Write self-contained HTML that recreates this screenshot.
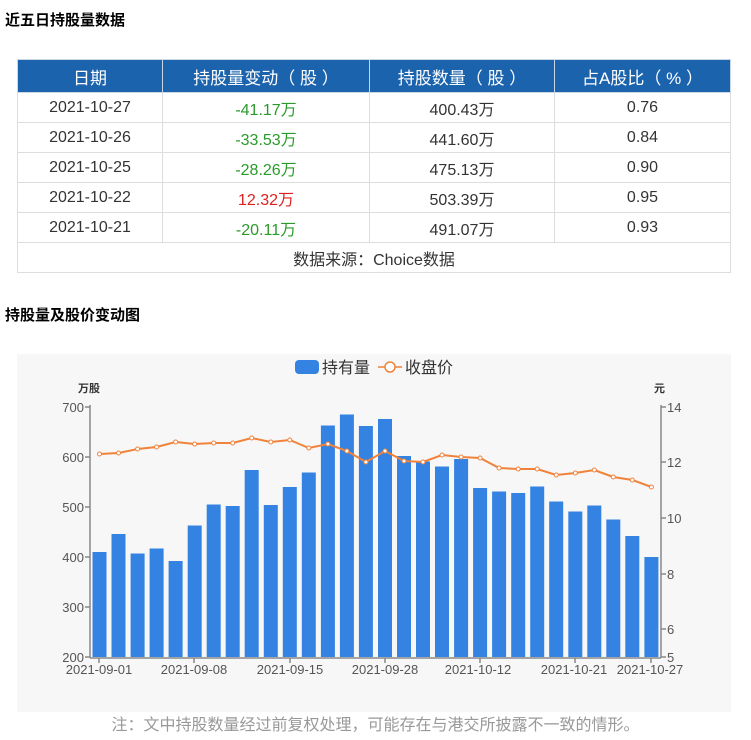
<!DOCTYPE html>
<html><head><meta charset="utf-8"><style>
body{margin:0;width:751px;height:740px;background:#fff;font-family:"Liberation Sans","Noto Sans CJK SC",sans-serif;position:relative;overflow:hidden}
.h{position:absolute;left:5px;font-weight:bold;font-size:15px;color:#000}
table{position:absolute;left:17px;top:59px;width:714px;border-collapse:collapse;font-size:16px;color:#333}
td,th{border:1px solid #ddd;text-align:center;height:29px;padding:0}
th{background:#1c63ae;color:#fff;font-weight:normal;font-size:17px;height:32px;border-color:#c9d6e6}
.g{color:#2a9b2a}.r{color:#e02020}
.note{position:absolute;top:711px;left:0;width:751px;text-align:center;font-size:16px;color:#999}
</style></head><body>
<div class="h" style="top:9px">近五日持股量数据</div>
<table>
<tr><th style="width:144px">日期</th><th style="width:206px">持股量变动（ 股 ）</th><th style="width:184px">持股数量（ 股 ）</th><th>占A股比（ % ）</th></tr>
<tr><td>2021-10-27</td><td class="g">-41.17万</td><td>400.43万</td><td>0.76</td></tr>
<tr><td>2021-10-26</td><td class="g">-33.53万</td><td>441.60万</td><td>0.84</td></tr>
<tr><td>2021-10-25</td><td class="g">-28.26万</td><td>475.13万</td><td>0.90</td></tr>
<tr><td>2021-10-22</td><td class="r">12.32万</td><td>503.39万</td><td>0.95</td></tr>
<tr><td>2021-10-21</td><td class="g">-20.11万</td><td>491.07万</td><td>0.93</td></tr>
<tr><td colspan="4">数据来源：Choice数据</td></tr>
</table>
<div class="h" style="top:304px">持股量及股价变动图</div>
<svg style="position:absolute;left:0;top:0" width="751" height="740" font-family="Liberation Sans,Noto Sans CJK SC,sans-serif">
<rect x="17" y="354" width="714" height="358" fill="#f7f7f7"/>
<rect x="295" y="360" width="24" height="14" rx="4" fill="#3483e2"/>
<text x="322" y="373" font-size="16" fill="#333">持有量</text>
<line x1="378" y1="367" x2="402" y2="367" stroke="#f0823a" stroke-width="1.5"/>
<circle cx="390" cy="367" r="5" fill="#fff" stroke="#f0823a" stroke-width="1.5"/>
<text x="405" y="373" font-size="16" fill="#333">收盘价</text>
<text x="78" y="392" font-size="11" font-weight="bold" fill="#333">万股</text>
<text x="654" y="392" font-size="11" font-weight="bold" fill="#333">元</text>
<g font-size="13" fill="#555" text-anchor="end">
<text x="84" y="412">700</text><text x="84" y="462">600</text><text x="84" y="512">500</text><text x="84" y="562">400</text><text x="84" y="612">300</text><text x="84" y="662">200</text></g>
<g font-size="13" fill="#555">
<text x="667" y="412">14</text><text x="667" y="467">12</text><text x="667" y="523">10</text><text x="667" y="579">8</text><text x="667" y="634">6</text><text x="667" y="662">5</text></g>
<g fill="#3483e2">
<rect x="92.5" y="552" width="14" height="105"/><rect x="111.5" y="534" width="14" height="123"/><rect x="130.6" y="553.5" width="14" height="103.5"/><rect x="149.6" y="548.5" width="14" height="108.5"/><rect x="168.6" y="561" width="14" height="96"/><rect x="187.7" y="525.5" width="14" height="131.5"/><rect x="206.7" y="504.5" width="14" height="152.5"/><rect x="225.7" y="506" width="14" height="151"/><rect x="244.7" y="470" width="14" height="187"/><rect x="263.8" y="505" width="14" height="152"/><rect x="282.8" y="487" width="14" height="170"/><rect x="301.8" y="472.5" width="14" height="184.5"/><rect x="320.9" y="425.5" width="14" height="231.5"/><rect x="339.9" y="414.5" width="14" height="242.5"/><rect x="358.9" y="426" width="14" height="231"/><rect x="378" y="419" width="14" height="238"/><rect x="397" y="456" width="14" height="201"/><rect x="416" y="461.5" width="14" height="195.5"/><rect x="435" y="466.5" width="14" height="190.5"/><rect x="454.1" y="459" width="14" height="198"/><rect x="473.1" y="488" width="14" height="169"/><rect x="492.1" y="491.5" width="14" height="165.5"/><rect x="511.2" y="493" width="14" height="164"/><rect x="530.2" y="486.5" width="14" height="170.5"/><rect x="549.2" y="501.5" width="14" height="155.5"/><rect x="568.3" y="511.5" width="14" height="145.5"/><rect x="587.3" y="505.5" width="14" height="151.5"/><rect x="606.3" y="519.5" width="14" height="137.5"/><rect x="625.3" y="536" width="14" height="121"/><rect x="644.4" y="557" width="14" height="100"/>
</g>
<g stroke="#888" stroke-width="1.5" fill="none">
<line x1="90" y1="405" x2="90" y2="658"/><line x1="661" y1="405" x2="661" y2="658"/><line x1="90" y1="658" x2="661" y2="658"/>
<path d="M85 407h5M85 457h5M85 507h5M85 557h5M85 607h5M85 657h5M661 407h5M661 462h5M661 518h5M661 574h5M661 629h5M661 657h5M99 658v5M194 658v5M290 658v5M385 658v5M480 658v5M575 658v5M651 658v5"/>
</g>
<polyline fill="none" stroke="#f0823a" stroke-width="2" points="99.5,454 118.5,453 137.6,449 156.6,447 175.6,442 194.7,444 213.7,443 232.7,443 251.7,438 270.8,442 289.8,440 308.8,448 327.9,444 346.9,451 365.9,462 385,451 404,461 423,462 442,455 461.1,457 480.1,458 499.1,468 518.2,469 537.2,469 556.2,475 575.3,473 594.3,470 613.3,477 632.3,480 651.4,487"/>
<g fill="#fff" stroke="#f0823a" stroke-width="1">
<circle cx="99.5" cy="454" r="2"/><circle cx="118.5" cy="453" r="2"/><circle cx="137.6" cy="449" r="2"/><circle cx="156.6" cy="447" r="2"/><circle cx="175.6" cy="442" r="2"/><circle cx="194.7" cy="444" r="2"/><circle cx="213.7" cy="443" r="2"/><circle cx="232.7" cy="443" r="2"/><circle cx="251.7" cy="438" r="2"/><circle cx="270.8" cy="442" r="2"/><circle cx="289.8" cy="440" r="2"/><circle cx="308.8" cy="448" r="2"/><circle cx="327.9" cy="444" r="2"/><circle cx="346.9" cy="451" r="2"/><circle cx="365.9" cy="462" r="2"/><circle cx="385" cy="451" r="2"/><circle cx="404" cy="461" r="2"/><circle cx="423" cy="462" r="2"/><circle cx="442" cy="455" r="2"/><circle cx="461.1" cy="457" r="2"/><circle cx="480.1" cy="458" r="2"/><circle cx="499.1" cy="468" r="2"/><circle cx="518.2" cy="469" r="2"/><circle cx="537.2" cy="469" r="2"/><circle cx="556.2" cy="475" r="2"/><circle cx="575.3" cy="473" r="2"/><circle cx="594.3" cy="470" r="2"/><circle cx="613.3" cy="477" r="2"/><circle cx="632.3" cy="480" r="2"/><circle cx="651.4" cy="487" r="2"/>
</g>
<g font-size="13" fill="#555" text-anchor="middle">
<text x="99" y="674">2021-09-01</text><text x="194" y="674">2021-09-08</text><text x="290" y="674">2021-09-15</text><text x="385" y="674">2021-09-28</text><text x="478" y="674">2021-10-12</text><text x="574" y="674">2021-10-21</text><text x="650" y="674">2021-10-27</text></g>
</svg>
<div class="note">注：文中持股数量经过前复权处理，可能存在与港交所披露不一致的情形。</div>
</body></html>
